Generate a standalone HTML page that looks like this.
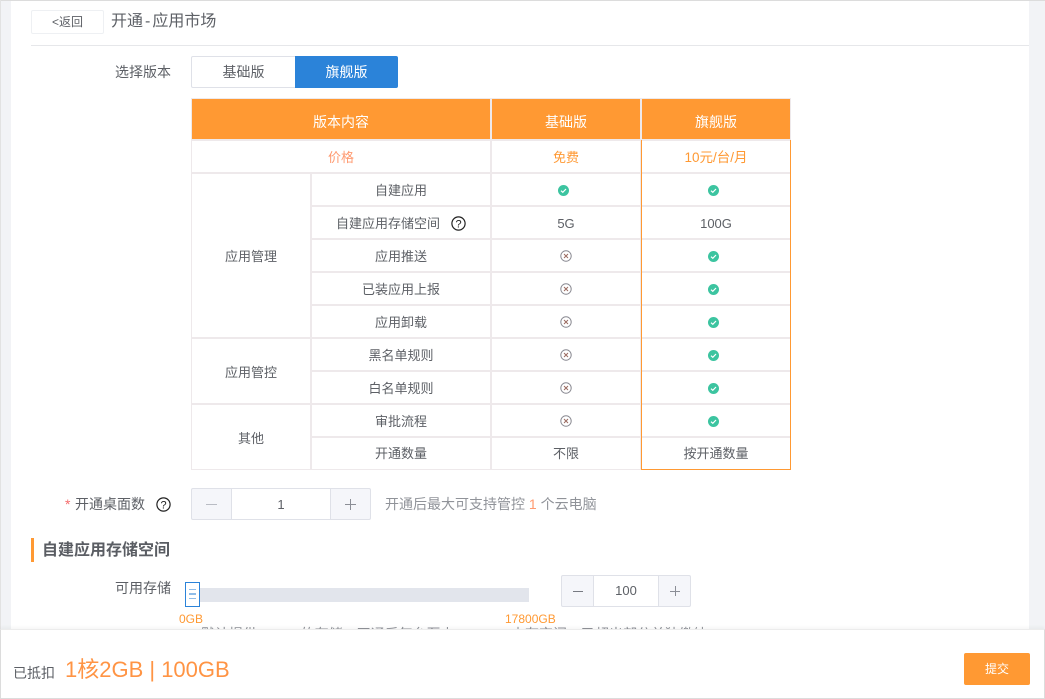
<!DOCTYPE html>
<html lang="zh">
<head>
<meta charset="utf-8">
<style>
*{box-sizing:border-box}
html,body{margin:0;padding:0}
body{width:1045px;height:699px;overflow:hidden;position:relative;background:#f2f3f6;font-family:"Liberation Sans","Noto Sans CJK SC",sans-serif;font-size:13px;color:#5d6066}
.a{position:absolute;white-space:nowrap}
.c{position:absolute;white-space:nowrap;text-align:center;line-height:20px}
#main{position:absolute;left:11px;top:1px;width:1018px;height:698px;background:#fff}
.h{background:#ff9933;position:absolute;top:99px;height:40px}
.hl{position:absolute;background:#eee9eb}
.or{position:absolute;background:#ff9933}
.c.t{color:#fff;line-height:44px;height:40px;font-size:14px}
.ok{position:absolute;width:11px;height:11px}
.no{position:absolute;width:12px;height:12px}
.l14{font-size:14px;line-height:20px}
</style>
</head>
<body>
<div class="a" style="left:0;top:0;width:1045px;height:1px;background:#dcdcdc"></div>
<div class="a" style="left:0;top:0;width:1px;height:699px;background:#e2e2e2"></div>
<div id="main"></div>

<div class="c" style="left:31px;top:10px;width:73px;height:24px;border:1px solid #eef0f3;border-radius:2px;line-height:22px;font-size:12px">&lt;返回</div>
<div class="a" style="left:111px;top:11px;font-size:16px;line-height:22px">开通<span style="padding:0 2px">-</span>应用市场</div>
<div class="a" style="left:31px;top:45px;width:998px;height:1px;background:#e6e7ea"></div>

<div class="a l14" style="left:115px;top:62px">选择版本</div>
<div class="c l14" style="left:191px;top:56px;width:105px;height:32px;border:1px solid #dfe1e8;border-radius:2px 0 0 2px;line-height:31px">基础版</div>
<div class="c l14" style="left:295px;top:56px;width:103px;height:32px;background:#2b83d9;color:#fff;border-radius:0 2px 2px 0;line-height:33px">旗舰版</div>

<!-- table -->
<div class="hl" style="left:191px;top:98px;width:600px;height:372px"></div>
<div class="a" style="left:192px;top:99px;width:598px;height:370px;background:#fff"></div>
<div class="h" style="left:192px;width:298px"></div>
<div class="h" style="left:492px;width:148px"></div>
<div class="h" style="left:642px;width:148px"></div>
<div class="c t" style="left:192px;top:100px;width:298px">版本内容</div>
<div class="c t" style="left:492px;top:100px;width:148px">基础版</div>
<div class="c t" style="left:642px;top:100px;width:148px">旗舰版</div>

<!-- horizontal lines -->
<div class="hl" style="left:192px;top:139px;width:598px;height:2px"></div>
<div class="hl" style="left:192px;top:172px;width:598px;height:2px"></div>
<div class="hl" style="left:311px;top:205px;width:479px;height:2px"></div>
<div class="hl" style="left:311px;top:238px;width:479px;height:2px"></div>
<div class="hl" style="left:311px;top:271px;width:479px;height:2px"></div>
<div class="hl" style="left:311px;top:304px;width:479px;height:2px"></div>
<div class="hl" style="left:192px;top:337px;width:598px;height:2px"></div>
<div class="hl" style="left:311px;top:370px;width:479px;height:2px"></div>
<div class="hl" style="left:192px;top:403px;width:598px;height:2px"></div>
<div class="hl" style="left:311px;top:436px;width:479px;height:2px"></div>
<!-- vertical lines -->
<div class="hl" style="left:310px;top:173px;width:2px;height:296px"></div>
<div class="hl" style="left:490px;top:99px;width:2px;height:370px"></div>
<div class="hl" style="left:640px;top:99px;width:2px;height:370px"></div>
<!-- orange frame -->
<div class="or" style="left:641px;top:140px;width:1px;height:330px"></div>
<div class="or" style="left:790px;top:140px;width:1px;height:330px"></div>
<div class="or" style="left:641px;top:469px;width:150px;height:1px"></div>

<!-- price row -->
<div class="c" style="left:192px;top:148px;width:298px;color:#ff9a70">价格</div>
<div class="c" style="left:492px;top:148px;width:148px;color:#ff9933">免费</div>
<div class="c" style="left:642px;top:148px;width:148px;color:#ff9933;font-size:13.5px">10元/台/月</div>

<!-- group labels -->
<div class="c" style="left:192px;top:247px;width:118px">应用管理</div>
<div class="c" style="left:192px;top:363px;width:118px">应用管控</div>
<div class="c" style="left:192px;top:429px;width:118px">其他</div>

<!-- feature names -->
<div class="c" style="left:312px;top:181px;width:178px">自建应用</div>
<div class="a" style="left:336px;top:214px;line-height:20px">自建应用存储空间</div>
<svg class="a" style="left:451px;top:216px" width="15" height="15" viewBox="0 0 15 15"><circle cx="7.5" cy="7.5" r="6.6" fill="none" stroke="#222" stroke-width="1.2"/><text x="7.5" y="11.4" font-size="11" font-family="Liberation Sans" text-anchor="middle" fill="#222">?</text></svg>
<div class="c" style="left:312px;top:247px;width:178px">应用推送</div>
<div class="c" style="left:312px;top:280px;width:178px">已装应用上报</div>
<div class="c" style="left:312px;top:313px;width:178px">应用卸载</div>
<div class="c" style="left:312px;top:346px;width:178px">黑名单规则</div>
<div class="c" style="left:312px;top:379px;width:178px">白名单规则</div>
<div class="c" style="left:312px;top:412px;width:178px">审批流程</div>
<div class="c" style="left:312px;top:444px;width:178px">开通数量</div>

<!-- basic col -->
<svg class="ok" style="left:558px;top:185px" viewBox="0 0 11 11"><circle cx="5.5" cy="5.5" r="5.5" fill="#3cc4a0"/><path d="M3 5.7L4.8 7.3L8 4" fill="none" stroke="#fff" stroke-width="1.2"/></svg>
<div class="c" style="left:492px;top:214px;width:148px">5G</div>
<svg class="no" style="left:560px;top:250px" viewBox="0 0 12 12"><circle cx="6" cy="6" r="5.2" fill="none" stroke="#8a8a92"/><path d="M4 4L8 8M8 4L4 8" stroke="#9a6a60"/></svg>
<svg class="no" style="left:560px;top:283px" viewBox="0 0 12 12"><circle cx="6" cy="6" r="5.2" fill="none" stroke="#8a8a92"/><path d="M4 4L8 8M8 4L4 8" stroke="#9a6a60"/></svg>
<svg class="no" style="left:560px;top:316px" viewBox="0 0 12 12"><circle cx="6" cy="6" r="5.2" fill="none" stroke="#8a8a92"/><path d="M4 4L8 8M8 4L4 8" stroke="#9a6a60"/></svg>
<svg class="no" style="left:560px;top:349px" viewBox="0 0 12 12"><circle cx="6" cy="6" r="5.2" fill="none" stroke="#8a8a92"/><path d="M4 4L8 8M8 4L4 8" stroke="#9a6a60"/></svg>
<svg class="no" style="left:560px;top:382px" viewBox="0 0 12 12"><circle cx="6" cy="6" r="5.2" fill="none" stroke="#8a8a92"/><path d="M4 4L8 8M8 4L4 8" stroke="#9a6a60"/></svg>
<svg class="no" style="left:560px;top:415px" viewBox="0 0 12 12"><circle cx="6" cy="6" r="5.2" fill="none" stroke="#8a8a92"/><path d="M4 4L8 8M8 4L4 8" stroke="#9a6a60"/></svg>
<div class="c" style="left:492px;top:444px;width:148px">不限</div>

<!-- flagship col -->
<svg class="ok" style="left:708px;top:185px" viewBox="0 0 11 11"><circle cx="5.5" cy="5.5" r="5.5" fill="#3cc4a0"/><path d="M3 5.7L4.8 7.3L8 4" fill="none" stroke="#fff" stroke-width="1.2"/></svg>
<div class="c" style="left:642px;top:214px;width:148px">100G</div>
<svg class="ok" style="left:708px;top:251px" viewBox="0 0 11 11"><circle cx="5.5" cy="5.5" r="5.5" fill="#3cc4a0"/><path d="M3 5.7L4.8 7.3L8 4" fill="none" stroke="#fff" stroke-width="1.2"/></svg>
<svg class="ok" style="left:708px;top:284px" viewBox="0 0 11 11"><circle cx="5.5" cy="5.5" r="5.5" fill="#3cc4a0"/><path d="M3 5.7L4.8 7.3L8 4" fill="none" stroke="#fff" stroke-width="1.2"/></svg>
<svg class="ok" style="left:708px;top:317px" viewBox="0 0 11 11"><circle cx="5.5" cy="5.5" r="5.5" fill="#3cc4a0"/><path d="M3 5.7L4.8 7.3L8 4" fill="none" stroke="#fff" stroke-width="1.2"/></svg>
<svg class="ok" style="left:708px;top:350px" viewBox="0 0 11 11"><circle cx="5.5" cy="5.5" r="5.5" fill="#3cc4a0"/><path d="M3 5.7L4.8 7.3L8 4" fill="none" stroke="#fff" stroke-width="1.2"/></svg>
<svg class="ok" style="left:708px;top:383px" viewBox="0 0 11 11"><circle cx="5.5" cy="5.5" r="5.5" fill="#3cc4a0"/><path d="M3 5.7L4.8 7.3L8 4" fill="none" stroke="#fff" stroke-width="1.2"/></svg>
<svg class="ok" style="left:708px;top:416px" viewBox="0 0 11 11"><circle cx="5.5" cy="5.5" r="5.5" fill="#3cc4a0"/><path d="M3 5.7L4.8 7.3L8 4" fill="none" stroke="#fff" stroke-width="1.2"/></svg>
<div class="c" style="left:642px;top:444px;width:148px">按开通数量</div>

<!-- desktop count -->
<div class="a l14" style="left:65px;top:494px;color:#f56c6c">*</div>
<div class="a l14" style="left:75px;top:494px">开通桌面数</div>
<svg class="a" style="left:156px;top:497px" width="15" height="15" viewBox="0 0 15 15"><circle cx="7.5" cy="7.5" r="6.6" fill="none" stroke="#222" stroke-width="1.2"/><text x="7.5" y="11.4" font-size="11" font-family="Liberation Sans" text-anchor="middle" fill="#222">?</text></svg>
<div class="a" style="left:191px;top:488px;width:180px;height:32px;border:1px solid #dfe1e8;border-radius:2px;background:#f5f6fa"></div>
<div class="c" style="left:231px;top:489px;width:100px;height:30px;background:#fff;border-left:1px solid #dfe1e8;border-right:1px solid #dfe1e8;line-height:31px">1</div>
<div class="a" style="left:206px;top:504px;width:11px;height:1px;background:#b9bcc4"></div>
<div class="a" style="left:345px;top:504px;width:11px;height:1px;background:#8b8e96"></div>
<div class="a" style="left:350px;top:499px;width:1px;height:11px;background:#8b8e96"></div>
<div class="a l14" style="left:385px;top:494px;color:#909399">开通后最大可支持管控 <span style="color:#ff9a70">1</span> 个云电脑</div>

<!-- section title -->
<div class="a" style="left:31px;top:538px;width:3px;height:24px;background:#ff9933"></div>
<div class="a" style="left:42px;top:540px;font-size:16px;font-weight:bold;line-height:21px;color:#5a5d63">自建应用存储空间</div>

<!-- slider -->
<div class="a l14" style="left:115px;top:578px">可用存储</div>
<div class="a" style="left:193px;top:588px;width:336px;height:14px;background:#e2e5ec"></div>
<div class="a" style="left:185px;top:582px;width:15px;height:25px;border:1px solid #2b83d9;background:#fff"></div>
<div class="a" style="left:189px;top:589px;width:7px;height:1px;background:#8fbce8"></div>
<div class="a" style="left:189px;top:593px;width:7px;height:2px;background:#8fbce8"></div>
<div class="a" style="left:189px;top:598px;width:7px;height:1px;background:#8fbce8"></div>
<div class="a" style="left:179px;top:612px;font-size:12px;line-height:15px;color:#ff9933">0GB</div>
<div class="a" style="left:505px;top:612px;font-size:12px;line-height:15px;color:#ff9933">17800GB</div>

<!-- stepper 100 -->
<div class="a" style="left:561px;top:575px;width:130px;height:32px;border:1px solid #dfe1e8;border-radius:2px;background:#f5f6fa"></div>
<div class="c" style="left:593px;top:576px;width:66px;height:30px;background:#fff;border-left:1px solid #dfe1e8;border-right:1px solid #dfe1e8;line-height:29px">100</div>
<div class="a" style="left:573px;top:591px;width:10px;height:1px;background:#777a82"></div>
<div class="a" style="left:670px;top:591px;width:10px;height:1px;background:#8b8e96"></div>
<div class="a" style="left:675px;top:586px;width:1px;height:10px;background:#8b8e96"></div>

<!-- clipped hint -->
<div class="a l14" style="left:201px;top:624px;color:#909399">默认提供100GB的存储，开通后每台至少 <span style="color:#ff9933;margin-left:5px">200GB</span> 内存空间，已超出部分单独缴纳</div>

<!-- footer -->
<div class="a" style="left:0;top:629px;width:1045px;height:70px;background:#fff;border:1px solid #dcdcdc;border-top:1px solid #ececec;box-shadow:0 -2px 3px rgba(0,0,0,.04)"></div>
<div class="a l14" style="left:13px;top:663px">已抵扣</div>
<div class="a" style="left:65px;top:655px;font-size:22px;line-height:30px;color:#ff9444">1核2GB | 100GB</div>
<div class="c" style="left:964px;top:653px;width:66px;height:32px;background:#ff9933;border-radius:2px;color:#fff;line-height:32px;font-size:12px">提交</div>
</body>
</html>
